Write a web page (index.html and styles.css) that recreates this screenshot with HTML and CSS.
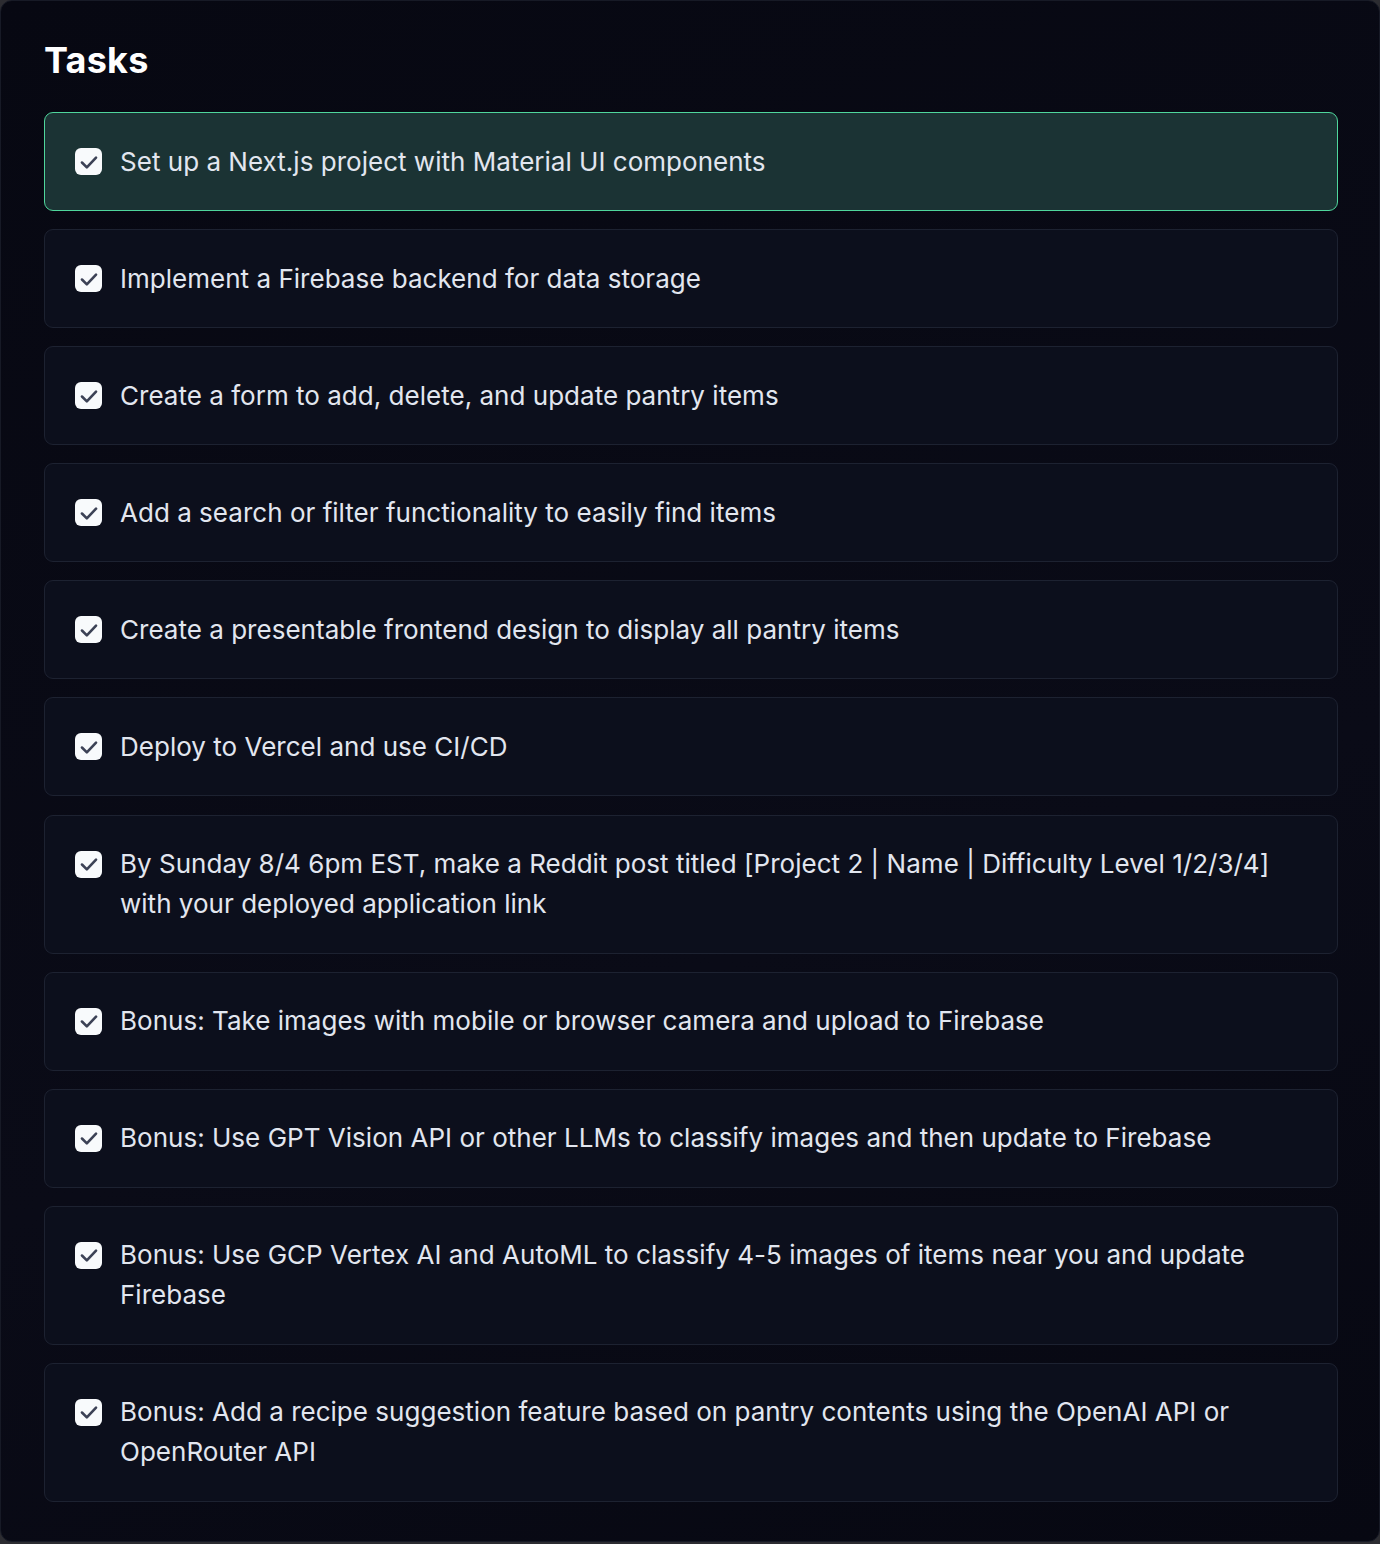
FILE: index.html
```html
<!DOCTYPE html>
<html lang="en">
<head>
<meta charset="utf-8">
<title>Tasks</title>
<link rel="stylesheet" href="styles.css">
</head>
<body>
<main class="panel">
  <h1 class="title">Tasks</h1>
  <ul class="tasks">
    <li class="task task-active"><span class="box"><svg viewBox="0 0 24 24"><polyline points="5.5,12.5 10,17 18.5,8"/></svg></span><span class="text">Set up a Next.js project with Material UI components</span></li>
    <li class="task"><span class="box"><svg viewBox="0 0 24 24"><polyline points="5.5,12.5 10,17 18.5,8"/></svg></span><span class="text">Implement a Firebase backend for data storage</span></li>
    <li class="task"><span class="box"><svg viewBox="0 0 24 24"><polyline points="5.5,12.5 10,17 18.5,8"/></svg></span><span class="text">Create a form to add, delete, and update pantry items</span></li>
    <li class="task"><span class="box"><svg viewBox="0 0 24 24"><polyline points="5.5,12.5 10,17 18.5,8"/></svg></span><span class="text">Add a search or filter functionality to easily find items</span></li>
    <li class="task"><span class="box"><svg viewBox="0 0 24 24"><polyline points="5.5,12.5 10,17 18.5,8"/></svg></span><span class="text">Create a presentable frontend design to display all pantry items</span></li>
    <li class="task"><span class="box"><svg viewBox="0 0 24 24"><polyline points="5.5,12.5 10,17 18.5,8"/></svg></span><span class="text">Deploy to Vercel and use CI/CD</span></li>
    <li class="task"><span class="box"><svg viewBox="0 0 24 24"><polyline points="5.5,12.5 10,17 18.5,8"/></svg></span><span class="text">By Sunday 8/4 6pm EST, make a Reddit post titled [Project 2 | Name | Difficulty Level 1/2/3/4] with your deployed application link</span></li>
    <li class="task"><span class="box"><svg viewBox="0 0 24 24"><polyline points="5.5,12.5 10,17 18.5,8"/></svg></span><span class="text">Bonus: Take images with mobile or browser camera and upload to Firebase</span></li>
    <li class="task"><span class="box"><svg viewBox="0 0 24 24"><polyline points="5.5,12.5 10,17 18.5,8"/></svg></span><span class="text">Bonus: Use GPT Vision API or other LLMs to classify images and then update to Firebase</span></li>
    <li class="task"><span class="box"><svg viewBox="0 0 24 24"><polyline points="5.5,12.5 10,17 18.5,8"/></svg></span><span class="text">Bonus: Use GCP Vertex AI and AutoML to classify 4-5 images of items near you and update Firebase</span></li>
    <li class="task"><span class="box"><svg viewBox="0 0 24 24"><polyline points="5.5,12.5 10,17 18.5,8"/></svg></span><span class="text">Bonus: Add a recipe suggestion feature based on pantry contents using the OpenAI API or OpenRouter API</span></li>
  </ul>
</main>
</body>
</html>
```
FILE: styles.css
```css
html, body {
  margin: 0;
  padding: 0;
}
body {
  background: #2c2c31;
  height: 1544px;
  font-family: Inter, "Noto Sans", sans-serif;
}
.panel {
  box-sizing: border-box;
  height: 1542px;
  border: 1px solid #171a26;
  border-radius: 12px;
  background: linear-gradient(160deg, #070812 0%, #0a0b17 60%, #070812 100%);
  padding: 36px 41px 0 43px;
}
.title {
  margin: 0 0 29px 0;
  font-size: 36px;
  line-height: 46px;
  font-weight: 700;
  color: #ffffff;
  letter-spacing: 0.2px;
}
.tasks {
  list-style: none;
  margin: 0;
  padding: 0;
  display: flex;
  flex-direction: column;
  gap: 18.1px;
}
.task {
  display: flex;
  align-items: flex-start;
  gap: 18px;
  padding: 28.5px 30px;
  border: 1px solid #1d2231;
  border-radius: 9px;
  background: #0c0f1c;
}
.task-active {
  background: #1b3334;
  border-color: #4fd69c;
}
.box {
  flex: none;
  width: 27px;
  height: 27px;
  margin-top: 6.5px;
  border-radius: 6px;
  background: #f8fafc;
  display: flex;
  align-items: center;
  justify-content: center;
}
.box svg {
  width: 26px;
  height: 26px;
  fill: none;
  stroke: #3c4256;
  stroke-width: 2.4;
  stroke-linecap: round;
  stroke-linejoin: round;
}
.text {
  font-size: 26px;
  line-height: 40px;
  color: #e2e6ef;
  letter-spacing: 0.02px;
}
```
